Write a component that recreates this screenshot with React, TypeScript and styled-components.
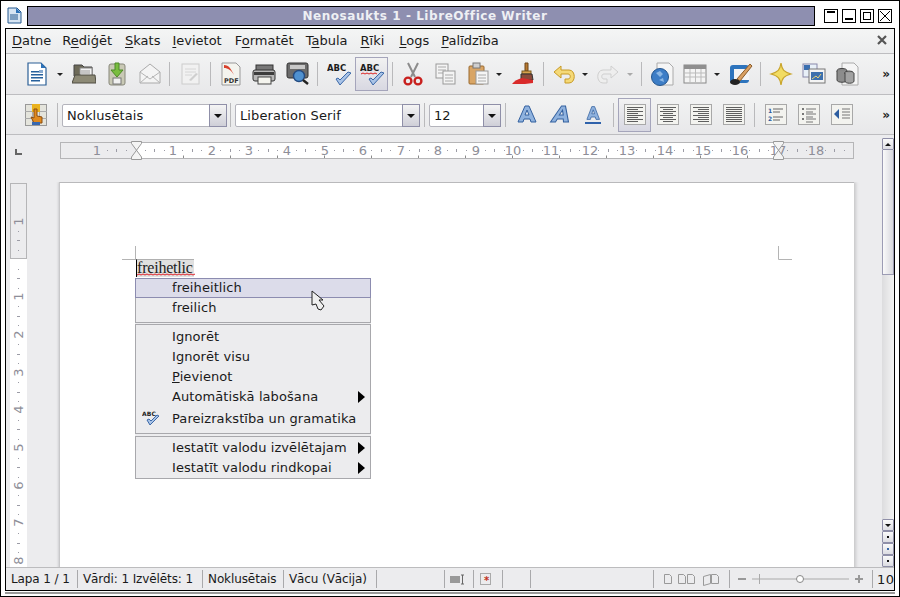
import React from "react";
import styled, { createGlobalStyle } from "styled-components";

const UI = `"DejaVu Sans", sans-serif`;

const GlobalStyle = createGlobalStyle`
  html, body { margin: 0; padding: 0; width: 900px; height: 597px; overflow: hidden; background: #fff; }
  * { box-sizing: border-box; }
`;

const Ico = ({ children, w = 24, h = 24 }: { children: React.ReactNode; w?: number; h?: number }) => (
  <svg width={w} height={h} viewBox={`0 0 ${w} ${h}`}>{children}</svg>
);

const AbcCheck = ({ wave }: { wave?: boolean }) => (
  <Ico>
    <text x="0" y="9" fontFamily="DejaVu Sans" fontWeight="700" fontSize="8.500" fill="#1c1c1c">ABC</text>
    {wave && <path d="M1 12l2-1 2 1 2-1 2 1 2-1 2 1 2-1 2 1" stroke="#d22" fill="none" />}
    <path d="M9 17l4 6 11-12-3-1-8 8-2-2z" fill="#a9c3e6" stroke="#3b68a8" />
  </Ico>
);

const LetterA = ({ italic, under }: { italic?: boolean; under?: boolean }) => (
  <Ico w={22} h={22}>
    <g transform={italic ? "translate(4 0) skewX(-14)" : under ? "translate(3.500 1) scale(0.7 0.8)" : undefined}>
      <path d="M2 18L9 2h4l7 16h-5l-1-3H8l-1 3zM9 11h4l-2-5z" fill="#8fb2de" stroke="#33609f" fillRule="evenodd" />
    </g>
    {under && <rect x="3" y="18" width="16" height="2" fill="#2f62ab" />}
  </Ico>
);

const AlignIcon = ({ rows, kind }: { rows: number[]; kind: "l" | "c" | "r" }) => (
  <Ico w={22} h={22}>
    <rect x="0.500" y="0.500" width="21" height="20" fill="#f3f3ef" stroke="#a8a8a8" />
    {rows.map((w, i) => (
      <rect key={i} x={kind === "l" ? 3 : kind === "r" ? 19 - w : 11 - w / 2} y={3 + i * 2} width={w} height="1" fill="#5f5f5f" />
    ))}
  </Ico>
);

const Icons: Record<string, React.ReactNode> = {
  writer: (
    <Ico>
      <path d="M3 1h13l5 5v17H3z" fill="#fff" stroke="#2b5f96" strokeWidth="1.200" />
      <path d="M16 1l5 5h-5z" fill="#2d72b8" />
      <rect x="6" y="9" width="8" height="1.500" fill="#26609c" />
      <rect x="6" y="12" width="12" height="1.500" fill="#26609c" />
      <rect x="6" y="15" width="12" height="1.500" fill="#26609c" />
      <rect x="6" y="18" width="9" height="1.500" fill="#26609c" />
      <rect x="14" y="8" width="4" height="3" fill="#88aad0" />
    </Ico>
  ),
  open: (
    <Ico>
      <path d="M2 3h8l2 2h8v9H2z" fill="#6d6a58" stroke="#444" />
      <rect x="8" y="6" width="12" height="9" fill="#f2f2f2" stroke="#888" />
      <path d="M9 9h9M9 11h9" stroke="#999" />
      <path d="M0 21l3-8h20l1 8z" fill="#8d8a76" stroke="#4f4d42" />
    </Ico>
  ),
  save: (
    <Ico>
      <rect x="4" y="2" width="16" height="21" rx="2" fill="#c9c9b5" stroke="#87877a" />
      <rect x="8" y="16" width="8" height="6" fill="#f1f1f1" stroke="#777" />
      <path d="M10 1h4v7h4l-6 7-6-7h4z" fill="#79bd3f" stroke="#4d8a28" />
    </Ico>
  ),
  mail: (
    <Ico>
      <path d="M2 10l10-8 10 8v11H2z" fill="#f4f4f4" stroke="#aaa" />
      <path d="M2 10l10 7 10-7M2 21l8-7M22 21l-8-7" fill="none" stroke="#b5b5b5" />
    </Ico>
  ),
  edit: (
    <Ico>
      <rect x="4" y="2" width="17" height="20" fill="#f1f1f1" stroke="#ccc" />
      <path d="M7 7h11M7 10h11M7 13h7" stroke="#d6d6d6" />
      <path d="M11 18l7-7 2 1-7 7z" fill="#cfcfcf" />
    </Ico>
  ),
  pdf: (
    <Ico>
      <path d="M3 1h14l4 4v18H3z" fill="#f4f4ee" stroke="#999" />
      <path d="M5 3c5 0 7 4 10 10-3-5-6-7-10-7z" fill="#d8402c" />
      <text x="5" y="21" fontFamily="DejaVu Sans" fontWeight="700" fontSize="6.500" fill="#333">PDF</text>
    </Ico>
  ),
  print: (
    <Ico>
      <rect x="4" y="3" width="17" height="6" fill="#777" stroke="#333" />
      <rect x="1" y="8" width="22" height="11" rx="2" fill="#b8b8b8" stroke="#333" />
      <rect x="2" y="10" width="20" height="3" fill="#3c3c3c" />
      <rect x="6" y="15" width="13" height="7" fill="#f4f4ee" stroke="#444" />
    </Ico>
  ),
  preview: (
    <Ico>
      <rect x="2" y="1" width="21" height="15" rx="2" fill="#6b6b6b" stroke="#333" />
      <rect x="5" y="3" width="15" height="4" fill="#c8c8c8" />
      <circle cx="14" cy="14" r="5.500" fill="#4f91d0" stroke="#234a80" strokeWidth="1.400" />
      <path d="M18 18l5 4" stroke="#222" strokeWidth="2.400" />
    </Ico>
  ),
  cut: (
    <Ico>
      <path d="M7 1l7 14M17 1l-7 14" stroke="#8c8c8c" strokeWidth="2" fill="none" />
      <circle cx="7" cy="19" r="3.400" fill="none" stroke="#c8201e" strokeWidth="2.400" />
      <circle cx="17" cy="19" r="3.400" fill="none" stroke="#c8201e" strokeWidth="2.400" />
    </Ico>
  ),
  copy: (
    <Ico>
      <rect x="2" y="2" width="12" height="14" fill="#f4f4f4" stroke="#999" />
      <path d="M4 5h8M4 8h8M4 11h8" stroke="#aaa" />
      <rect x="9" y="9" width="12" height="13" fill="#f4f4f4" stroke="#999" />
      <path d="M11 13h8M11 16h8M11 19h8" stroke="#aaa" />
    </Ico>
  ),
  paste: (
    <Ico>
      <rect x="2" y="4" width="15" height="18" rx="1" fill="#d9a565" stroke="#9a6b30" />
      <rect x="6" y="1" width="7" height="5" fill="#cfcfcf" stroke="#777" />
      <rect x="9" y="9" width="12" height="13" fill="#f5f5f5" stroke="#999" />
      <path d="M11 13h8M11 16h8M11 19h8" stroke="#aaa" />
    </Ico>
  ),
  brush: (
    <Ico>
      <path d="M14 1h3v8h-3z" fill="#b87a30" stroke="#6d4518" />
      <rect x="11" y="9" width="9" height="3" fill="#d9a24c" stroke="#7b5a20" />
      <path d="M10 12h11l1 6H10z" fill="#8a4a3a" stroke="#333" />
      <path d="M1 22c2-3 6-5 10-6l11 2v3l-8 1z" fill="#d92a2a" />
    </Ico>
  ),
  undo: (
    <Ico>
      <path d="M9 4L2 10l7 6v-4h7c3 0 3 5 0 5h-3v4h4c7 0 7-13 0-13H9z" fill="#f5d977" stroke="#c79a26" />
    </Ico>
  ),
  redo: (
    <Ico>
      <path d="M15 4l7 6-7 6v-4H8c-3 0-3 5 0 5h3v4H7C0 21 0 8 7 8h8z" fill="#eeeeee" stroke="#cfcfcf" />
    </Ico>
  ),
  web: (
    <Ico>
      <path d="M7 1h12l4 4v18H7z" fill="#f5f5f5" stroke="#aaa" />
      <circle cx="10" cy="15" r="8.500" fill="#3d7dc6" stroke="#24568f" />
      <path d="M6 11l4-2 3 3-3 3zM9 18l4-2 1 4z" fill="#8cb7e4" />
    </Ico>
  ),
  table: (
    <Ico>
      <rect x="1" y="3" width="22" height="18" fill="#f4f4f4" stroke="#888" />
      <rect x="1" y="3" width="22" height="4" fill="#8f8f8f" />
      <path d="M1 11h22M1 15h22M7 7v14M12.500 7v14M18 7v14" stroke="#bbb" />
    </Ico>
  ),
  draw: (
    <Ico>
      <rect x="1" y="3" width="19" height="18" rx="3" fill="#2d74bd" />
      <rect x="5" y="7" width="15" height="11" fill="#f4f4f4" />
      <path d="M8 17L21 2l2 2-12 15z" fill="#d9a062" stroke="#8a5c2a" />
      <ellipse cx="6" cy="20" rx="5" ry="3" fill="#222" />
    </Ico>
  ),
  star: (
    <Ico>
      <path d="M12 1c1 7 3 9 10 11-7 2-9 4-10 11-1-7-3-9-10-11 7-2 9-4 10-11z" fill="#f2dc62" stroke="#c9a52c" strokeWidth="1.200" />
    </Ico>
  ),
  gallery: (
    <Ico>
      <rect x="1" y="2" width="14" height="13" fill="#e8f0f8" stroke="#88a" />
      <rect x="2" y="3" width="6" height="5" fill="#3a6fb0" />
      <rect x="7" y="7" width="16" height="14" fill="#f4f4f4" stroke="#777" />
      <rect x="9" y="10" width="12" height="8" fill="#3d70ad" />
      <path d="M10 17l4-3 2 2 3-4" stroke="#e9d278" fill="none" />
    </Ico>
  ),
  data: (
    <Ico>
      <path d="M7 1h12l4 4v18H7z" fill="#f5f5f5" stroke="#aaa" />
      <ellipse cx="7" cy="9" rx="5" ry="2.500" fill="#888" stroke="#444" />
      <path d="M2 9v9c0 3 10 3 10 0V9" fill="#8c8c8c" stroke="#444" />
      <ellipse cx="14" cy="11" rx="4.500" ry="2" fill="#999" stroke="#444" />
      <path d="M10 11v8c0 3 9 3 9 0v-8" fill="#a2a2a2" stroke="#444" />
    </Ico>
  ),
  styles: (
    <Ico>
      <rect x="0.500" y="1.500" width="21" height="21" fill="#e4e4dc" stroke="#999" />
      <path d="M7.500 1v21M14.500 1v21M0 8.500h22M0 15.500h22" stroke="#aaa" />
      <rect x="7" y="1" width="8" height="8" fill="#eab21e" />
      <path d="M9 6h3v7l5 1v6H9l-3-6 3 1z" fill="#e08a1e" stroke="#8a4c10" />
      <rect x="7" y="19" width="8" height="3" fill="#3868b0" />
    </Ico>
  ),
  numbered: (
    <Ico w={22} h={22}>
      <rect x="0.500" y="0.500" width="21" height="20" fill="#f3f3ef" stroke="#a8a8a8" />
      <text x="3" y="9" fontFamily="DejaVu Sans" fontSize="6" fontWeight="700" fill="#2c5da0">1</text>
      <text x="3" y="17" fontFamily="DejaVu Sans" fontSize="6" fontWeight="700" fill="#2c5da0">2</text>
      <path d="M8 5h10M8 8h7M8 13h10M8 16h7" stroke="#666" />
    </Ico>
  ),
  bullets: (
    <Ico w={22} h={22}>
      <rect x="0.500" y="0.500" width="21" height="20" fill="#f3f3ef" stroke="#a8a8a8" />
      <path d="M4 4h2v2H4zM4 9h2v2H4zM4 14h2v2H4z" fill="#777" />
      <path d="M8 5h10M8 8h7M8 10h10M8 13h7M8 15h10M8 18h7" stroke="#777" />
    </Ico>
  ),
  indent: (
    <Ico w={22} h={22}>
      <rect x="0.500" y="0.500" width="21" height="20" fill="#f3f3ef" stroke="#a8a8a8" />
      <path d="M8 5v10l-5-5z" fill="#2c5da0" />
      <path d="M11 5h8M11 8h8M11 11h8M11 14h8" stroke="#777" />
    </Ico>
  ),
};

/* window chrome */

const Desktop = styled.div`
  width: 900px;
  height: 597px;
  background: #fff;
  border: 1px solid #000;
  padding: 4px 4px 5px 4px;
  display: flex;
  flex-direction: column;
  gap: 2px;
  font-family: ${UI};
  color: #1a1a1a;
`;

const TitleRow = styled.div`
  height: 21px;
  display: flex;
  align-items: center;
`;

const AppIcon = styled.div`
  width: 17px;
  height: 17px;
  margin-right: 5px;
`;

const TitleBar = styled.div`
  width: 788px;
  height: 20px;
  padding-left: 8px;
  background: #8e8fb0;
  border: 1px solid #000;
  color: #eef0f4;
  font-size: 12px;
  font-weight: 700;
  letter-spacing: 0.55px;
  display: flex;
  align-items: center;
  justify-content: center;
`;

const WinButtons = styled.div`
  display: flex;
  gap: 4px;
  margin-left: 9px;
`;

const WinButton = styled.div`
  width: 14px;
  height: 14px;
  border: 1px solid #000;
  background: #fff;
  display: flex;
`;

const AppFrame = styled.div`
  flex: 1;
  min-height: 0;
  background: #ececee;
  border: 1px solid #000;
  display: flex;
  flex-direction: column;
  box-shadow: 0 1px 0 #fff, 0 3px 0 #999;
`;

const MenuBar = styled.div`
  height: 25px;
  flex: none;
  display: flex;
  align-items: center;
  padding: 0 7px 2px 6px;
  font-size: 13px;
  background: linear-gradient(#f4f5f5, #ecedee);
  border-bottom: 1px solid #bdbdc0;
`;

const MenuItem = styled.span<{ $gap?: number }>`
  white-space: nowrap;
  margin-left: ${(p) => p.$gap ?? 12}px;
  &:first-child { margin-left: 0; }
  u { text-decoration-thickness: 1px; text-underline-offset: 2px; }
`;

const MenuClose = styled.svg`
  margin-left: auto;
`;

const Toolbar = styled.div<{ $h: number }>`
  height: ${(p) => p.$h}px;
  flex: none;
  display: flex;
  align-items: center;
  padding-left: 14px;
  background: linear-gradient(#f2f3f3, #e8e8ea);
  border-bottom: 1px solid #bdbdc0;
  position: relative;
`;

const ToolSlot = styled.div<{ $active?: boolean }>`
  width: 33px;
  height: 34px;
  flex: none;
  display: flex;
  align-items: center;
  justify-content: center;
  border: 1px solid ${(p) => (p.$active ? "#a5a5bb" : "transparent")};
  background: ${(p) => (p.$active ? "linear-gradient(#f2f2f2,#d8d8e2)" : "none")};
`;

const DropCaret = styled.span<{ $off?: boolean; $ml?: number; $mr?: number }>`
  width: 0;
  height: 0;
  flex: none;
  margin: 0 ${(p) => p.$mr ?? 4}px 0 ${(p) => p.$ml ?? 2}px;
  border-left: 3px solid transparent;
  border-right: 3px solid transparent;
  border-top: 3px solid ${(p) => (p.$off ? "#aaa" : "#222")};
`;

const Divider = styled.span<{ $ml?: number; $mr?: number }>`
  width: 1px;
  height: 24px;
  flex: none;
  margin: 0 ${(p) => p.$mr ?? 4}px 0 ${(p) => p.$ml ?? 4}px;
  background: #b9b9bb;
`;

const More = styled.span`
  position: absolute;
  right: 4px;
  top: 50%;
  transform: translateY(-50%);
  font-size: 12px;
  font-weight: 700;
  color: #222;
`;

const Combo = styled.div<{ $w: number }>`
  width: ${(p) => p.$w}px;
  height: 23px;
  flex: none;
  margin-top: 2px;
  display: flex;
  background: #fff;
  border: 1px solid #b4b4bc;
  border-radius: 2px;
  font-size: 13px;
  letter-spacing: 0.1px;
  align-items: center;
  padding-left: 4px;
`;

const ComboText = styled.span`
  flex: 1;
`;

const ComboBtn = styled.span`
  width: 18px;
  height: 23px;
  margin-right: -1px;
  border: 1px solid #8f8fa8;
  background: linear-gradient(#f4f4f4, #cfcfd8);
  display: flex;
  align-items: center;
  justify-content: center;
`;

const ComboCaret = styled.span`
  border-left: 4px solid transparent;
  border-right: 4px solid transparent;
  border-top: 4px solid #111;
`;

/* rulers and the document */

const Workspace = styled.div`
  flex: 1;
  min-height: 0;
  display: flex;
  position: relative;
`;

const Main = styled.div`
  flex: 1;
  min-width: 0;
  display: flex;
  flex-direction: column;
`;

const RulerRow = styled.div`
  height: 47px;
  flex: none;
  display: flex;
  padding-top: 7px;
`;

const Corner = styled.div`
  width: 54px;
  padding: 7px 0 0 9px;
`;

const CornerMark = styled.div`
  width: 7px;
  height: 6px;
  border-left: 2px solid #666;
  border-bottom: 2px solid #666;
`;

const HRuler = styled.div`
  width: 794px;
  height: 17px;
  border: 1px solid #b5b5b7;
  position: relative;
  background: linear-gradient(90deg, #ececee 0 75px, #fff 75px 717px, #ececee 717px);
`;

const RulerMarks = styled.svg`
  position: absolute;
  left: 0;
  top: 0;
`;

const HTick = styled.span`
  position: absolute;
  top: 0;
  font-size: 13px;
  line-height: 15px;
  color: #8e8e98;
  transform: translateX(-50%);
`;

const Margin = styled.span`
  position: absolute;
  top: -2px;
  width: 11px;
  height: 19px;
`;

const DocRow = styled.div`
  flex: 1;
  min-height: 0;
  display: flex;
  overflow: hidden;
`;

const VRulerCol = styled.div`
  width: 53px;
  flex: none;
  padding: 1px 0 0 4px;
`;

const VRuler = styled.div`
  width: 17px;
  height: 100%;
  position: relative;
  background: #fff;
`;

const VMargin = styled.div`
  height: 76px;
  border: 1px solid #b5b5b7;
  background: #ececee;
`;

const VTick = styled.span`
  position: absolute;
  left: 0;
  width: 17px;
  text-align: center;
  font-size: 13px;
  line-height: 13px;
  color: #8e8e98;
  transform: rotate(-90deg);
`;

const Sheet = styled.div`
  width: 795px;
  height: 420px;
  flex: none;
  background: #fff;
  border-top: 1px solid #b9b9bb;
  border-left: 1px solid #c8c8ca;
  box-shadow: 2px 0 3px #c8c8ca, -1px 0 2px #d0d0d2;
  position: relative;
`;

const CropMark = styled.span`
  position: absolute;
  width: 14px;
  height: 14px;
`;

const Word = styled.span`
  position: absolute;
  left: 76px;
  top: 76px;
  width: 58px;
  height: 18px;
  background: #e0e0e0;
  font-family: "Liberation Serif", serif;
  font-size: 16px;
  letter-spacing: -0.2px;
  line-height: 16px;
  color: #222;
  white-space: nowrap;
  border-top: 1px solid #b0b0b0;
  border-left: 1px solid #000;
`;

const Squiggle = styled.svg`
  position: absolute;
  left: 0;
  top: 13px;
`;

/* scrollbar */

const ScrollCol = styled.div`
  width: 12px;
  flex: none;
  margin-top: 3px;
  display: flex;
  flex-direction: column;
`;

const ScrollBtn = styled.div`
  height: 12px;
  flex: none;
  border: 1px solid #8f8fa8;
  border-radius: 1px;
  background: linear-gradient(#fafafa, #dcdce2);
  display: flex;
  align-items: center;
  justify-content: center;
`;

const ScrollThumb = styled.div`
  height: 125px;
  flex: none;
  border: 1px solid #9c9cb4;
  border-top: none;
  background: linear-gradient(90deg, #fafafa, #d8d8de);
`;

const ScrollTrack = styled.div`
  flex: 1;
  background: linear-gradient(90deg, #dcdcde, #f4f4f4);
`;

const UpArrow = styled.span`
  border-left: 3px solid transparent;
  border-right: 3px solid transparent;
  border-bottom: 3px solid #111;
`;

const DownArrow = styled.span`
  border-left: 3px solid transparent;
  border-right: 3px solid transparent;
  border-top: 3px solid #111;
`;

const Dot = styled.span<{ $c?: string }>`
  width: 2px;
  height: 2px;
  background: ${(p) => p.$c ?? "#111"};
`;

/* spelling menu */

const ContextMenu = styled.div`
  position: absolute;
  left: 129px;
  top: 143px;
  width: 236px;
  background: #ececee;
  font-size: 13px;
  letter-spacing: 0.08px;
  display: flex;
  flex-direction: column;
  z-index: 3;
`;

const MenuGroup = styled.div<{ $pt?: number; $pb?: number; $mt?: number }>`
  border: 1px solid #a8a8ac;
  padding: ${(p) => p.$pt ?? 0}px 0 ${(p) => p.$pb ?? 0}px;
  margin-top: ${(p) => p.$mt ?? 0}px;
`;

const Row = styled.div<{ $h?: number; $hot?: boolean }>`
  height: ${(p) => p.$h ?? 20}px;
  display: flex;
  align-items: center;
  padding: 0 0 2px 36px;
  position: relative;
  white-space: nowrap;
  ${(p) =>
    p.$hot &&
    `background:#dcdcea; border:1px solid #8c8cb0; margin:-1px -1px 0;`}
`;

const SubArrow = styled.span`
  position: absolute;
  right: 5px;
  top: 50%;
  transform: translateY(-50%);
  border-top: 6px solid transparent;
  border-bottom: 6px solid transparent;
  border-left: 7px solid #000;
`;

const RowIcon = styled.span`
  position: absolute;
  left: 6px;
  top: 2px;
  display: flex;
`;

const Pointer = styled.svg`
  position: absolute;
  left: 305px;
  top: 155px;
  z-index: 4;
`;

/* status bar */

const StatusBar = styled.div`
  height: 23px;
  flex: none;
  display: flex;
  align-items: center;
  border-top: 1px solid #bcbcbe;
  background: #ececee;
  font-size: 12px;
  letter-spacing: -0.1px;
  overflow: hidden;
`;

const Cell = styled.div<{ $w: number }>`
  width: ${(p) => p.$w}px;
  height: 18px;
  flex: none;
  display: flex;
  align-items: center;
  padding-left: 5px;
  white-space: nowrap;
  border-right: 1px solid #a9a9ab;
`;

const ZoomCell = styled.div`
  flex: 1;
  padding-left: 4px;
  font-size: 13px;
  letter-spacing: 0.5px;
  white-space: nowrap;
`;

const ticksH = (() => {
  const out: string[] = [];
  for (let i = -2; i < 20; i++) {
    const x = 112 + i * 37.8;
    out.push(`M${Math.round(x + 9.4) + 0.5} 7v1M${Math.round(x + 18.9) + 0.5} 6v3M${Math.round(x + 28.3) + 0.5} 7v1`);
  }
  return out.join("");
})();

const ticksV = (() => {
  const out: string[] = [];
  for (let i = -2; i < 12; i++) {
    const y = 114 + i * 37.8;
    out.push(`M8 ${Math.round(y + 9.4) + 0.5}h1M7 ${Math.round(y + 18.9) + 0.5}h3M8 ${Math.round(y + 28.3) + 0.5}h1`);
  }
  return out.join("");
})();

const tabStops = Array.from({ length: 13 }, (_, i) => 122 + i * 47)
  .map((x) => `M${x + 0.5} 12.5v3M${x - 2} 15.5h5`)
  .join("");

const squiggle = "M0 2" + "l2-1 2 1".repeat(15);

const HOURGLASS = "M0.500 0.500h10v2L0.500 16v2.500h10V16L0.500 2.500v-2z";

export default function App() {
  const hNums: [number, string][] = [
    [36, "1"], [112, "1"], [151, "2"], [188, "3"], [226, "4"], [264, "5"], [302, "6"], [340, "7"], [377, "8"], [415, "9"], [452, "10"], [490, "11"], [529, "12"], [566, "13"], [604, "14"], [642, "15"], [679, "16"], [717, "17"], [755, "18"],
  ];
  const vNums: [number, string][] = [
    [32, "1"], [107, "1"], [145, "2"], [183, "3"], [220, "4"], [258, "5"], [296, "6"], [333, "7"], [371, "8"],
  ];
  return (
    <Desktop>
      <GlobalStyle />
      <TitleRow>
        <AppIcon>
          <Ico w={17} h={17}>
            <path d="M3 1h9l4 4v11H3z" fill="#d7e5f3" stroke="#24588f" />
            <path d="M11 1l5 5h-5z" fill="#2d72b8" />
            <path d="M5 8h8M5 10h8M5 12h8" stroke="#24588f" />
          </Ico>
        </AppIcon>
        <TitleBar>Nenosaukts 1 - LibreOffice Writer</TitleBar>
        <WinButtons>
          <WinButton><svg width="12" height="12"><rect x="2" y="1" width="8" height="2" /></svg></WinButton>
          <WinButton><svg width="12" height="12"><rect x="2" y="8" width="8" height="2" /></svg></WinButton>
          <WinButton><svg width="12" height="12"><rect x="2.500" y="2.500" width="7" height="7" fill="none" stroke="#000" /></svg></WinButton>
          <WinButton><svg width="12" height="12"><path d="M1 1l10 10M11 1L1 11" stroke="#000" /></svg></WinButton>
        </WinButtons>
      </TitleRow>
      <AppFrame>
        <MenuBar>
          <MenuItem><u>D</u>atne</MenuItem>
          <MenuItem $gap={11}>R<u>e</u>diģēt</MenuItem>
          <MenuItem $gap={13}><u>S</u>kats</MenuItem>
          <MenuItem><u>I</u>evietot</MenuItem>
          <MenuItem $gap={13}>F<u>o</u>rmatēt</MenuItem>
          <MenuItem>T<u>a</u>bula</MenuItem>
          <MenuItem $gap={13}><u>R</u>īki</MenuItem>
          <MenuItem $gap={15}><u>L</u>ogs</MenuItem>
          <MenuItem><u>P</u>alīdzība</MenuItem>
          <MenuClose width="10" height="10"><path d="M1 1l8 8M9 1L1 9" stroke="#555" strokeWidth="2.200" /></MenuClose>
        </MenuBar>
        <Toolbar $h={41}>
          <ToolSlot>{Icons.writer}</ToolSlot>
          <DropCaret $ml={4} />
          <ToolSlot>{Icons.open}</ToolSlot>
          <ToolSlot>{Icons.save}</ToolSlot>
          <ToolSlot>{Icons.mail}</ToolSlot>
          <Divider $ml={3} $mr={3} />
          <ToolSlot>{Icons.edit}</ToolSlot>
          <Divider $mr={3} />
          <ToolSlot>{Icons.pdf}</ToolSlot>
          <ToolSlot>{Icons.print}</ToolSlot>
          <ToolSlot>{Icons.preview}</ToolSlot>
          <Divider />
          <ToolSlot><AbcCheck /></ToolSlot>
          <ToolSlot $active><AbcCheck wave /></ToolSlot>
          <Divider $mr={3} />
          <ToolSlot>{Icons.cut}</ToolSlot>
          <ToolSlot>{Icons.copy}</ToolSlot>
          <ToolSlot>{Icons.paste}</ToolSlot>
          <DropCaret $ml={1} />
          <ToolSlot>{Icons.brush}</ToolSlot>
          <Divider $mr={3} />
          <ToolSlot>{Icons.undo}</ToolSlot>
          <DropCaret $mr={3} />
          <ToolSlot>{Icons.redo}</ToolSlot>
          <DropCaret $off $ml={3} />
          <Divider $mr={3} />
          <ToolSlot>{Icons.web}</ToolSlot>
          <ToolSlot>{Icons.table}</ToolSlot>
          <DropCaret $ml={3} />
          <ToolSlot>{Icons.draw}</ToolSlot>
          <Divider $ml={3} $mr={3} />
          <ToolSlot>{Icons.star}</ToolSlot>
          <ToolSlot>{Icons.gallery}</ToolSlot>
          <ToolSlot>{Icons.data}</ToolSlot>
          <More>»</More>
        </Toolbar>
        <Toolbar $h={40}>
          <ToolSlot>{Icons.styles}</ToolSlot>
          <Divider />
          <Combo $w={165}><ComboText>Noklusētais</ComboText><ComboBtn><ComboCaret /></ComboBtn></Combo>
          <Divider $ml={3} $mr={4} />
          <Combo $w={185}><ComboText>Liberation Serif</ComboText><ComboBtn><ComboCaret /></ComboBtn></Combo>
          <Divider />
          <Combo $w={72}><ComboText>12</ComboText><ComboBtn><ComboCaret /></ComboBtn></Combo>
          <Divider />
          <ToolSlot><LetterA /></ToolSlot>
          <ToolSlot><LetterA italic /></ToolSlot>
          <ToolSlot><LetterA under /></ToolSlot>
          <Divider />
          <ToolSlot $active><AlignIcon kind="l" rows={[16, 11, 16, 11, 16, 11, 16, 11]} /></ToolSlot>
          <ToolSlot><AlignIcon kind="c" rows={[16, 10, 16, 10, 16, 10, 16, 10]} /></ToolSlot>
          <ToolSlot><AlignIcon kind="r" rows={[16, 11, 16, 11, 16, 11, 16, 11]} /></ToolSlot>
          <ToolSlot><AlignIcon kind="l" rows={[16, 16, 16, 16, 16, 16, 16, 16]} /></ToolSlot>
          <Divider />
          <ToolSlot>{Icons.numbered}</ToolSlot>
          <ToolSlot>{Icons.bullets}</ToolSlot>
          <ToolSlot>{Icons.indent}</ToolSlot>
          <More>»</More>
        </Toolbar>
        <Workspace>
          <Main>
            <RulerRow>
              <Corner><CornerMark /></Corner>
              <HRuler>
                <RulerMarks width="792" height="15">
                  <path d={ticksH} stroke="#9c9ca6" fill="none" />
                  <path d={tabStops} stroke="#8a8a8a" fill="none" />
                </RulerMarks>
                {hNums.map(([x, n], i) => <HTick key={i} style={{ left: x }}>{n}</HTick>)}
                <Margin style={{ left: 70 }}>
                  <svg width="11" height="19"><path d={HOURGLASS} fill="#f4f4f4" stroke="#999" /></svg>
                </Margin>
                <Margin style={{ left: 712 }}>
                  <svg width="11" height="19"><path d={HOURGLASS} fill="#f4f4f4" stroke="#999" /></svg>
                </Margin>
              </HRuler>
            </RulerRow>
            <DocRow>
              <VRulerCol>
                <VRuler>
                  <VMargin />
                  <RulerMarks width="17" height="390">
                    <path d={ticksV} stroke="#9c9ca6" fill="none" />
                  </RulerMarks>
                  {vNums.map(([y, n], i) => <VTick key={i} style={{ top: y }}>{n}</VTick>)}
                </VRuler>
              </VRulerCol>
              <Sheet>
                <CropMark style={{ left: 62, top: 62 }}>
                  <svg width="14" height="14"><path d="M0 13.500h14M13.500 0v14" stroke="#b4b4b4" fill="none" /></svg>
                </CropMark>
                <CropMark style={{ left: 718, top: 62 }}>
                  <svg width="14" height="14"><path d="M0.500 0v13.500h14" stroke="#b4b4b4" fill="none" /></svg>
                </CropMark>
                <Word>
                  freihetlic
                  <Squiggle width="58" height="3">
                    <path d={squiggle} stroke="#e0222a" fill="none" />
                  </Squiggle>
                </Word>
              </Sheet>
            </DocRow>
          </Main>
          <ScrollCol>
            <ScrollBtn><UpArrow /></ScrollBtn>
            <ScrollThumb />
            <ScrollTrack />
            <ScrollBtn><DownArrow /></ScrollBtn>
            <ScrollBtn><Dot /></ScrollBtn>
            <ScrollBtn><Dot $c="#3868a8" /></ScrollBtn>
            <ScrollBtn><Dot /></ScrollBtn>
          </ScrollCol>
          <ContextMenu>
            <MenuGroup $pb={4}>
              <Row $hot>freiheitlich</Row>
              <Row>freilich</Row>
            </MenuGroup>
            <MenuGroup $mt={1} $pt={2} $pb={2}>
              <Row>Ignorēt</Row>
              <Row>Ignorēt visu</Row>
              <Row><span><u>P</u>ievienot</span></Row>
              <Row>Automātiskā labošana<SubArrow /></Row>
              <Row $h={24}>
                <RowIcon><Ico w={18} h={18}>
                  <text x="0" y="7" fontFamily="DejaVu Sans" fontWeight="700" fontSize="6" fill="#222">ABC</text>
                  <path d="M5 11l3 5 9-9-2-1-6 6-2-2z" fill="#a9c3e6" stroke="#3b68a8" />
                </Ico></RowIcon>
                Pareizrakstība un gramatika
              </Row>
            </MenuGroup>
            <MenuGroup $mt={2} $pt={1}>
              <Row>Iestatīt valodu izvēlētajam<SubArrow /></Row>
              <Row>Iestatīt valodu rindkopai<SubArrow /></Row>
            </MenuGroup>
          </ContextMenu>
          <Pointer width="16" height="23">
            <path d="M1 1v14l4-1 2 5 3 1 3-4-5-6h4z" fill="#efefef" stroke="#222" />
          </Pointer>
        </Workspace>
        <StatusBar>
          <Cell $w={72}>Lapa 1 / 1</Cell>
          <Cell $w={125}>Vārdi: 1 Izvēlēts: 1</Cell>
          <Cell $w={81}>Noklusētais</Cell>
          <Cell $w={93}>Vācu (Vācija)</Cell>
          <Cell $w={68} />
          <Cell $w={29}>
            <svg width="18" height="12"><rect x="0" y="3" width="10" height="7" fill="#999" /><path d="M11 2h3M12.500 2v9M11 11h3" stroke="#666" fill="none" /></svg>
          </Cell>
          <Cell $w={29}>
            <svg width="14" height="14"><rect x="1.500" y="1.500" width="10" height="11" fill="none" stroke="#aaa" /><text x="5" y="12" fontSize="10" fontWeight="700" fill="#c03020" fontFamily="DejaVu Sans">*</text></svg>
          </Cell>
          <Cell $w={28} />
          <Cell $w={123} />
          <Cell $w={76}>
            <svg width="62" height="14">
              <path d="M5.500 2.500h5l2 2v7h-7zM19.500 2.500h5l2 2v7h-7zM28.500 2.500h5l2 2v7h-7zM44.500 4.500l7-2v9l-7 2zM52.500 2.500h5l2 2v7h-7z" fill="none" stroke="#999" />
            </svg>
          </Cell>
          <Cell $w={143}>
            <svg width="132" height="14">
              <rect x="3" y="6" width="8" height="2" fill="#999" />
              <rect x="17" y="6.500" width="97" height="1" fill="#aaa" />
              <rect x="24" y="2" width="1" height="10" fill="#aaa" />
              <circle cx="65" cy="7" r="3.500" fill="#fff" stroke="#888" />
              <path d="M120 7h8M124 3v8" stroke="#999" strokeWidth="2" />
            </svg>
          </Cell>
          <ZoomCell>10</ZoomCell>
        </StatusBar>
      </AppFrame>
    </Desktop>
  );
}
